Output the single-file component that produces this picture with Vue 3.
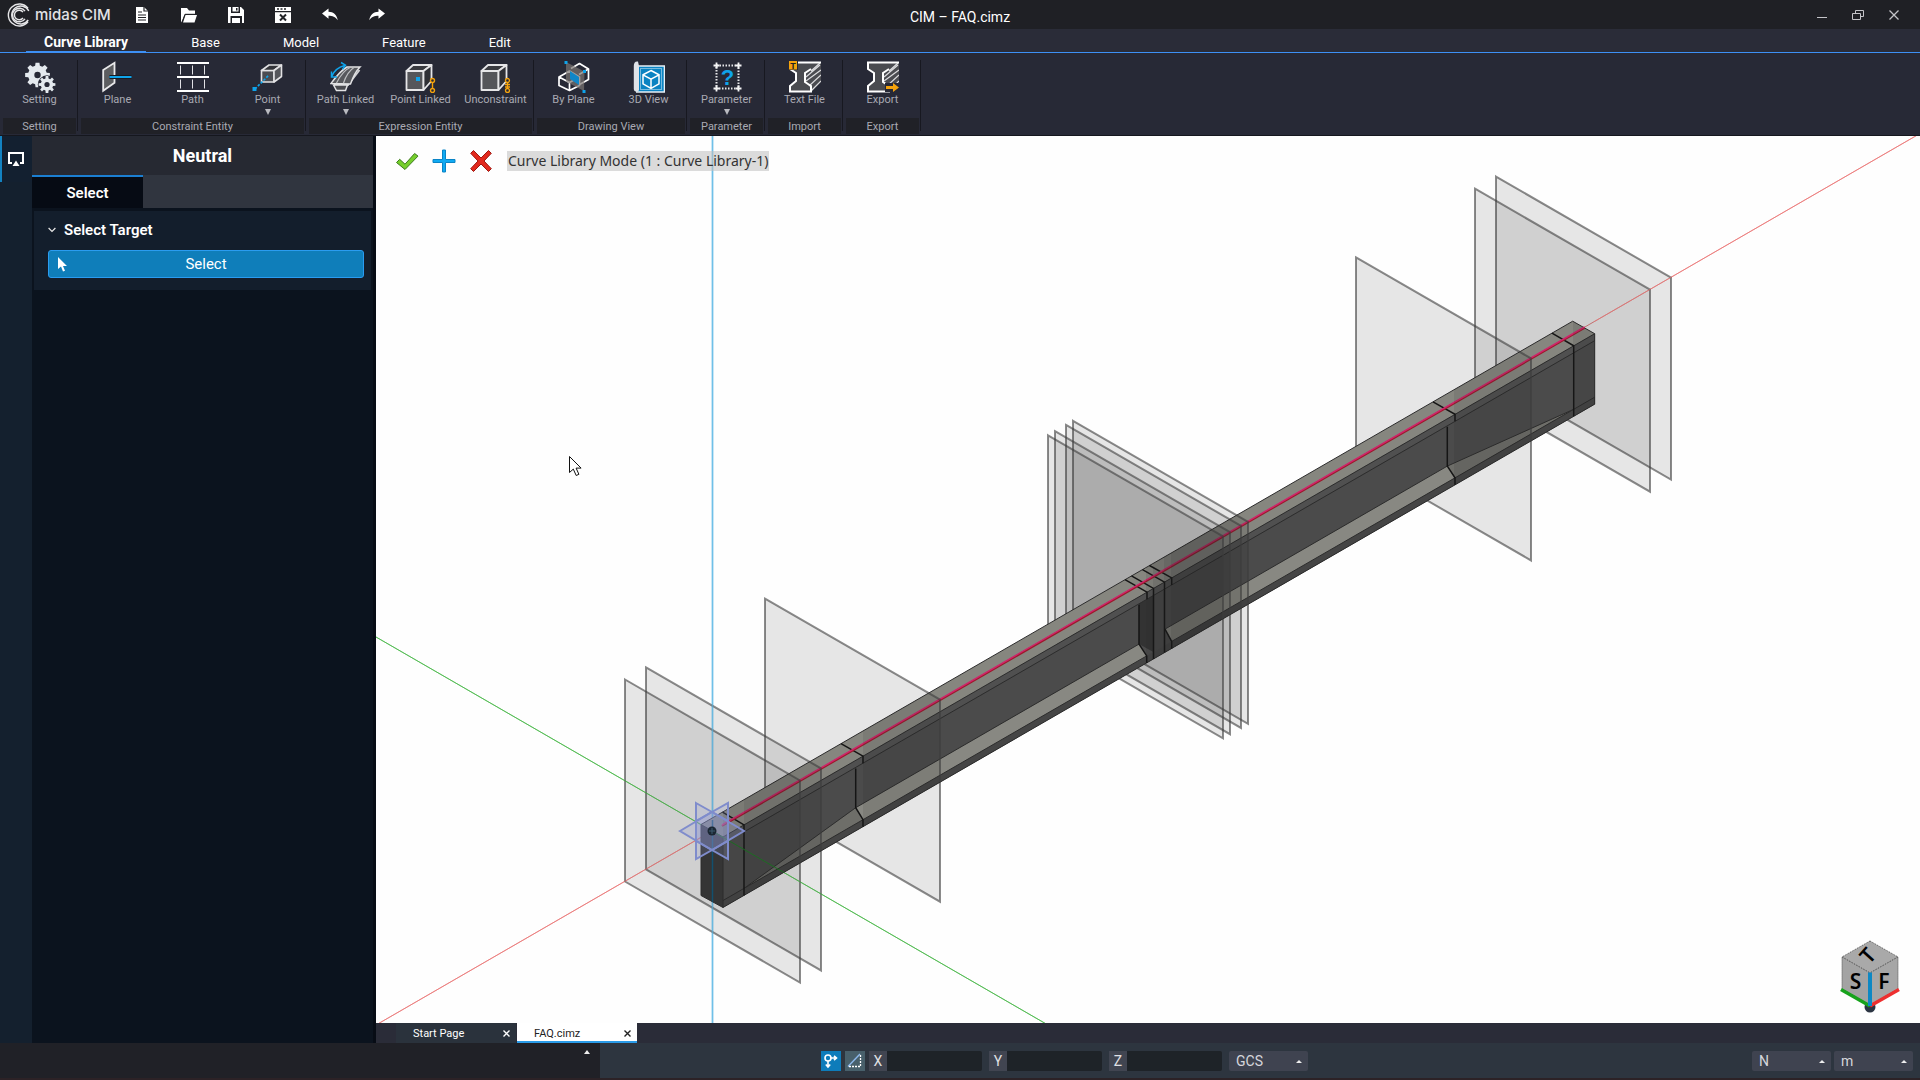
<template>
  <div class="app">
    <header class="titlebar">
      <div class="brand">
        <svg width="24" height="24" viewBox="0 0 24 24" fill="none" stroke="#e6e6e8" stroke-width="1.4">
          <path d="M21 5.2A11 11 0 1 0 21 18.8" />
          <path d="M21.8 8A9 9 0 1 0 21.2 17" />
          <path d="M18 8.2A6.8 6.8 0 1 0 18 15.8" />
          <path d="M16 9A4.8 4.8 0 1 0 16 15" />
        </svg>
        <span class="brand-name">midas CIM</span>
      </div>
      <nav class="quick">
        <button v-for="q in quickActions" :key="q.name" type="button" :aria-label="q.name">
          <svg width="18" height="18" viewBox="0 0 18 18"><g v-html="q.icon"></g></svg>
        </button>
      </nav>
      <h1 class="doc-title">CIM – FAQ.cimz</h1>
      <div class="window-controls">
        <button type="button" aria-label="Minimize">
          <svg width="12" height="12" viewBox="0 0 12 12" stroke="#c4c4c8"><path d="M1 8.5h10" /></svg>
        </button>
        <button type="button" aria-label="Restore">
          <svg width="12" height="12" viewBox="0 0 12 12" fill="none" stroke="#c4c4c8"><path d="M.5 4.5h8v6h-8zM3.500 4.500v-3h8v6h-3" /></svg>
        </button>
        <button type="button" aria-label="Close">
          <svg width="12" height="12" viewBox="0 0 12 12" stroke="#c4c4c8" stroke-width="1.3"><path d="M1.500 1.500l9 9M10.500 1.500l-9 9" /></svg>
        </button>
      </div>
    </header>

    <nav class="menu">
      <button
        v-for="tab in menuTabs"
        :key="tab"
        type="button"
        :class="{ active: tab === activeTab }"
        @click="activeTab = tab"
      >{{ tab }}</button>
    </nav>

    <section class="ribbon">
      <div v-for="group in ribbon" :key="group.title" class="group">
        <div class="tools">
          <button v-for="tool in group.tools" :key="tool.label" type="button" class="tool">
            <svg width="32" height="32" viewBox="0 0 32 32"><g v-html="tool.icon"></g></svg>
            <span>{{ tool.label }}</span>
            <svg v-if="tool.menu" class="caret" width="6" height="6" viewBox="0 0 6 6"><path d="M0 0h6L3 6z" fill="#b9bac0" /></svg>
          </button>
        </div>
        <div class="group-title">{{ group.title }}</div>
      </div>
    </section>

    <main class="workspace">
      <aside class="rail">
        <button type="button" class="rail-item" aria-label="Display">
          <svg width="16" height="14" viewBox="0 0 16 14"><path d="M4 11H1V1h14v10h-3" fill="none" stroke="#fff" stroke-width="2" /><path d="M8 8.500l3.500 5.500h-7z" fill="#fff" /></svg>
        </button>
      </aside>

      <aside class="panel">
        <h2>Neutral</h2>
        <div class="panel-tabs"><button type="button" class="panel-tab">Select</button></div>
        <section class="panel-section">
          <h3>
            <svg width="8" height="6" viewBox="0 0 8 6" fill="none" stroke="#e8e8e8" stroke-width="1.2"><path d="M.6 1L4 4.400 7.400 1" /></svg>
            Select Target
          </h3>
          <button type="button" class="select-btn">
            <svg width="10" height="15" viewBox="0 0 10 15" fill="#fff"><path d="M0 0v12l3-2.500L5 14.500l2-.8-2-4.700h4z" /></svg>
            <span>Select</span>
          </button>
        </section>
      </aside>

      <section class="canvas-column">
        <div class="viewport">
          <svg class="scene" viewBox="376 136 1544 887" preserveAspectRatio="xMidYMid slice">
            <defs>
              <clipPath id="beam-clip"><polygon :points="beam.outline" /></clipPath>
            </defs>

            <g class="axes">
              <path class="axis-x" d="M376 1025L1924 131.200" />
              <path class="axis-y" d="M376 637L1048 1025" />
              <path class="axis-z" d="M712.500 130V1030" />
            </g>
            <polygon v-for="p in planes" :key="p.x" class="plane" :points="p.full" />
            <g class="axes over-planes">
              <path class="axis-x" d="M376 1025L712 831M1594 321.700L1924 131.200" />
              <path class="axis-y" d="M376 637L1048 1025" />
              <path class="axis-z" d="M712.500 130V1030" />
            </g>

            <polygon v-for="(f, i) in beam.faces" :key="'f' + i" :points="f.points" :fill="f.fill" />
            <polyline v-for="(l, i) in beam.edges" :key="'e' + i" class="edge" :points="l" />
            <polyline v-for="(l, i) in beam.cuts" :key="'c' + i" class="cut" :points="l" />
            <path class="curve-shade" d="M722 826L1584.500 328" />
            <path class="curve" d="M722 825L1584.500 327" />

            <g clip-path="url(#beam-clip)">
              <polygon v-for="p in planes" :key="p.x" class="tint" :points="p.front" />
              <polyline v-for="p in planes" :key="'b' + p.x" class="plane-border" :points="p.border" />
              <path stroke="#1c6c22" d="M712 831L812 888.700" />
              <path stroke="#12506e" stroke-width="1.500" d="M712.500 820V905" />
            </g>

            <g class="gizmo">
              <polygon points="696,803 728,821 728,859 696,841" />
              <polygon points="728,803 728,841 696,859 696,821" />
              <polygon points="680,831 712,812 744,831 712,850" />
            </g>
            <circle cx="712" cy="831" r="4.500" fill="#1b2733" />
            <path d="M709 831h6M712 828v6" stroke="#3d5a70" stroke-width="1" />
            <path class="pointer" d="M569.500 456.500v16l3.800-3.400 2.900 6.400 2.700-1.200-2.800-6.200h5z" />
          </svg>

          <div class="mode-bar">
            <button type="button" aria-label="Apply">
              <svg width="24" height="24" viewBox="0 0 24 24"><path d="M1.500 13.500l3.200-3.200L10 15.200 19.600 4.500l3.400 2.600L10 20.500z" fill="#76cf2c" stroke="#3b7a1c" stroke-linejoin="round" /></svg>
            </button>
            <button type="button" aria-label="Add">
              <svg width="24" height="24" viewBox="0 0 24 24"><path d="M10.500 1h3v9.500H23v3h-9.500V23h-3v-9.500H1v-3h9.500z" fill="#10aaf2" stroke="#0a84c6" stroke-linejoin="round" /></svg>
            </button>
            <button type="button" aria-label="Cancel">
              <svg width="24" height="24" viewBox="0 0 24 24"><path d="M4.500 1.500L12 9l7.500-7.500 2.800 2.800L15 12l7.300 7.700-2.800 2.800L12 15l-7.500 7.500-2.800-2.800L9 12 1.700 4.300z" fill="#e2281c" stroke="#9d170f" stroke-linejoin="round" /></svg>
            </button>
            <output>Curve Library Mode (1 : Curve Library-1)</output>
          </div>

          <svg class="nav-cube" width="60" height="74" viewBox="0 0 60 74">
            <circle cx="30" cy="68" r="5.500" fill="#2b3442" />
            <g stroke="#555" stroke-dasharray="1 1">
              <polygon points="30,2 58,18 30,34 2,18" fill="#a9a9a9" />
              <polygon points="2,18 30,34 30,66 2,50" fill="#a3a3a3" />
              <polygon points="58,18 30,34 30,66 58,50" fill="#a6a6a6" />
            </g>
            <path d="M1 50.500L30 67" stroke="#17a31c" stroke-width="3.500" />
            <path d="M30 67L59 50.500" stroke="#ee2f2f" stroke-width="3.500" />
            <path d="M30 33.500V67" stroke="#0d88c4" stroke-width="4" />
            <g class="cube-text">
              <text x="15.500" y="50">S</text>
              <text x="44" y="50">F</text>
              <text x="0" y="7" transform="translate(28 17) rotate(-48)">T</text>
            </g>
          </svg>
        </div>

        <div class="doc-tabs">
          <div v-for="doc in docs" :key="doc.name" class="doc-tab" :class="{ current: doc.current }">
            <button type="button" class="doc-name">{{ doc.name }}</button>
            <button type="button" class="doc-close" :aria-label="'Close ' + doc.name">
              <svg width="7" height="7" viewBox="0 0 7 7" stroke="currentColor" stroke-width="1.400"><path d="M.5.5l6 6M6.500.5l-6 6" /></svg>
            </button>
          </div>
        </div>
      </section>
    </main>

    <footer class="status">
      <div class="console">
        <button type="button" aria-label="Expand console"><svg width="6" height="4" viewBox="0 0 6 4"><path d="M3 0l3 4H0z" fill="#eee" /></svg></button>
      </div>
      <div class="status-main">
        <div class="coords">
          <button type="button" class="toggle on" aria-label="Snap">
            <svg width="20" height="20" viewBox="0 0 20 20" fill="none" stroke="#fff" stroke-width="1.600"><circle cx="7" cy="7" r="3" /><path d="M10 7h5M13 4.800L15.500 7 13 9.200M7 10v6M4.800 13.500L7 16l2.200-2.500" /></svg>
          </button>
          <button type="button" class="toggle" aria-label="Relative">
            <svg width="20" height="20" viewBox="0 0 20 20" fill="none"><path d="M3 15.500L15 3" stroke="#8db8ec" stroke-width="1.400" /><path d="M15.500 4v11.500H4" stroke="#fff" stroke-width="1.300" stroke-dasharray="2 1" /></svg>
          </button>
          <label v-for="axis in ['X', 'Y', 'Z']" :key="axis" class="coord">
            <span>{{ axis }}</span>
            <input type="text" />
          </label>
          <label class="pick"><select aria-label="Coordinate system"><option>GCS</option></select></label>
        </div>
        <div class="units">
          <label class="pick"><select aria-label="Force unit"><option>N</option></select></label>
          <label class="pick"><select aria-label="Length unit"><option>m</option></select></label>
        </div>
      </div>
    </footer>
  </div>
</template>

<script setup>
import { ref } from 'vue';

const menuTabs = ['Curve Library', 'Base', 'Model', 'Feature', 'Edit'];
const activeTab = ref('Curve Library');

const docs = [
  { name: 'Start Page', current: false },
  { name: 'FAQ.cimz', current: true }
];

const quickActions = [
  { name: 'New', icon: '<path d="M3 1h8l4 4v12H3z" fill="#fff"/><path d="M11 1v4h4M5 6h4M5 9h8M5 11.500h8M5 14h8" fill="none" stroke="#222327" stroke-width="1.200"/>' },
  { name: 'Open', icon: '<path d="M1 16.500V2h6l2 2.500h6V8H5L2.500 14z" fill="#fff"/><path d="M5.500 9H17l-2.500 7.500H3z" fill="#fff"/><path d="M2.500 15L5 8.300h10" fill="none" stroke="#222327"/>' },
  { name: 'Save', icon: '<path d="M1 1h3v6h9V1h1l3 3v13h-2v-7H3.500v7H1z" fill="#fff"/><path d="M5.500 1h6v4.500h-6zM5 12h8v5H5z" fill="#fff"/><path d="M9 2h1.500v2.500H9z" fill="#222327"/>' },
  { name: 'Close file', icon: '<path d="M1 1h16v4H1zM1 6.200h16V17H1z" fill="#fff"/><path d="M3 3h2M6.500 3h2M10 3h2" stroke="#222327" stroke-width="1.500"/><path d="M6 8.500l6 6M12 8.500l-6 6" stroke="#222327" stroke-width="2"/>' },
  { name: 'Undo', icon: '<path d="M1 7.500L7.500 2.500v3.200c5 0 8.500 3 9.200 8.600-2.500-3.600-5-4.500-9.200-4.500v3z" fill="#fff"/>' },
  { name: 'Redo', icon: '<path d="M17 7.500L10.500 2.500v3.200c-5 0-8.500 3-9.200 8.600 2.500-3.600 5-4.500 9.200-4.500v3z" fill="#fff"/>' }
];

function gear(cx, cy, outer, inner, teeth) {
  const step = (Math.PI * 2) / teeth;
  const pts = [];
  for (let i = 0; i < teeth; i++) {
    const a = i * step;
    [[-0.32, inner], [-0.2, outer], [0.2, outer], [0.32, inner]].forEach(([k, r]) => {
      pts.push(`${(cx + Math.cos(a + k * step) * r).toFixed(2)},${(cy + Math.sin(a + k * step) * r).toFixed(2)}`);
    });
  }
  return `<polygon points="${pts.join(' ')}" fill="#e4e9ee"/>`;
}

const cube = '<g fill="#55565a" stroke="#e6e6e8" stroke-width="1.800" stroke-linejoin="round"><path d="M1.500 10h17v19h-17z"/><path d="M1.500 10L8 4h18.500l-8 6z" fill="#3a3b40"/><path d="M18.500 10l8-6v16l-8 9z" fill="#2f3036"/></g>';
const iBeam = '<path d="M0 1h32v20L22 31H0v-6l6-5v-8L0 8z" fill="#4a4b50"/><path d="M22 10L31 2M17 16L31 4M17 20L32 9M20 25L32 14M22 30L32 20" stroke="#dcdcdf" stroke-width="1.200"/><path d="M32 1.500H1V8l6 4v8l-6 5v5.500h21V25l-6-4v-9l6-4" fill="none" stroke="#fff" stroke-width="2"/>';

const icons = {
  setting: gear(13.5, 14, 12.5, 9.5, 8) + '<circle cx="13.500" cy="14" r="3.200" fill="#272936"/><circle cx="23" cy="23.500" r="9.200" fill="#272936"/>' + gear(23, 23.5, 8.5, 6.2, 8) + '<circle cx="23" cy="23.500" r="2.600" fill="#272936"/>',
  plane: '<path d="M1.200 9L12.500 1.800v20L1.200 29.800z" fill="#5c5d60" stroke="#e8e8ea" stroke-width="1.800"/><path d="M7.500 16h22" stroke="#1a1b20" stroke-width="4"/><path d="M7.500 16h22" stroke="#0fa3ea" stroke-width="2"/>',
  path: '<path d="M0 2h32M0 16h32M0 30h32" stroke="#fff" stroke-width="2"/><path d="M3.500 4.500v9M15.500 4.500v9M27.500 4.500v9M3.500 18.500v9M15.500 18.500v9M27.500 18.500v9" stroke="#e0e0e4"/>',
  point: '<g fill="#4c4d52" stroke="#e2e2e4" stroke-width="1.600" stroke-linejoin="round"><path d="M9.500 9.500H22V21H9.500z"/><path d="M9.500 9.500L17 4h12.500L22 9.500z" fill="#333439"/><path d="M22 9.500L29.500 4v11.500L22 21z" fill="#55565b"/></g><path d="M3 28L17 14" stroke="#0fa3ea" stroke-width="1.600" stroke-dasharray="2.500 1.500"/><path d="M.5 26h4v4h-4z" fill="#0fa3ea"/>',
  pathLinked: '<path d="M4 24h14l11.500-15" fill="none" stroke="#d0d0d2" stroke-width="2"/><path d="M3.500 24l3 5.500h9l2-5.500z" fill="#4a4b50" stroke="#e2e2e4" stroke-width="1.500"/><path d="M1 22.500C5 17 10 10 17 6h13c-4 4-7 10-9.500 17z" fill="#58595d" stroke="#e2e2e4" stroke-width="1.500"/><path d="M6.500 22C10 15 14 9 21 6M13.500 22c2-6 5-12 11-16" fill="none" stroke="#bfc0c3" stroke-width="1.200"/><path d="M2 15C4 10 9 6 14.500 4.500M1.500 10.500V16H7M11 1.500l4.500 2.700-3 4" fill="none" stroke="#0fa3ea" stroke-width="1.500"/>',
  pointLinked: cube + '<path d="M11 16h4v4h-4z" fill="#0fa3ea"/><g fill="#272936" stroke="#f5a30c" stroke-width="1.400"><path d="M27.500 21v8"/><circle cx="27.500" cy="19.500" r="2"/><circle cx="27.500" cy="29.500" r="2"/></g>',
  unconstraint: cube + '<g fill="#272936" stroke="#f5a30c" stroke-width="1.300"><path d="M27.500 22v5M25 23.500h5M25 26h5"/><circle cx="27.500" cy="19.500" r="2"/><circle cx="27.500" cy="29.500" r="2"/></g>',
  byPlane: '<g fill="none" stroke="#fff" stroke-width="1.700" stroke-linejoin="round"><path d="M13 7.500L21.500 2.500l9 5.500v10.500l-9 5"/><path d="M30.500 8L21 13.500"/></g><g fill="none" stroke="#fff" stroke-width="1.700" stroke-linejoin="round"><path d="M1 16l10.500-6 10 6-10 5.500zM1 16v8.500l10.500 5 10-5V16M11.500 21.500v8"/></g><path d="M8 1l18.500 9.500L26 30 8 20.500z" fill="#7b7572" fill-opacity=".7"/><path d="M12 10l9 6v8l-9-6z" fill="#0f86c8"/><path d="M6.500 0h3v3h-3zM25 9h3v3h-3zM24.500 29h3v3h-3z" fill="#0fa3ea"/>',
  view3d: '<path d="M5 5h26.500v26H3" fill="#0b83c2" stroke="#e8f0f6" stroke-width="1.600"/><path d="M5 .5C2 0 .8 2 .8 5v23c0 3 4.200 4 5.200 1V5z" fill="#dfe3e8"/><path d="M7.500 7.500h21v21h-21z" fill="none" stroke="#e6f3fb" stroke-dasharray="1 1"/><path d="M18 9.500l8 4.300v9L18 27.500l-8-4.700v-9zM10 13.800l8 4.400 8-4.400M18 18.200v9.300" fill="none" stroke="#fff" stroke-width="1.500"/>',
  parameter: '<path d="M5.500 4.500h22v23h-22z" fill="none" stroke="#e6e6e8" stroke-width="2" stroke-dasharray="1.500 1.500"/><path d="M2.500 4.500h6M5.500 1.500v6M24.500 4.500h6M27.500 1.500v6M2.500 27.500h6M5.500 24.500v6M24.500 27.500h6M27.500 24.500v6" stroke="#f4f4f5" stroke-width="1.800"/><text x="16.500" y="24" text-anchor="middle" font-family="Liberation Sans, sans-serif" font-size="22" font-weight="700" fill="#0fa3ea">?</text>',
  textFile: iBeam + '<path d="M-1-1H9V9H-1z" fill="#272936"/><path d="M0 0h8v8.500H0z" fill="#f5a30c"/><text x="4" y="7.500" text-anchor="middle" font-family="Liberation Sans, sans-serif" font-size="9" font-weight="700" fill="#222">T</text>',
  export: iBeam + '<path d="M18 22h14v9H18z" fill="#272936"/><path d="M19 25h7v-3l6 4.500-6 4.500v-3h-7z" fill="#f5a30c"/>'
};

const ribbon = [
  { title: 'Setting', tools: [{ label: 'Setting', icon: icons.setting }] },
  {
    title: 'Constraint Entity',
    tools: [
      { label: 'Plane', icon: icons.plane },
      { label: 'Path', icon: icons.path },
      { label: 'Point', icon: icons.point, menu: true }
    ]
  },
  {
    title: 'Expression Entity',
    tools: [
      { label: 'Path Linked', icon: icons.pathLinked, menu: true },
      { label: 'Point Linked', icon: icons.pointLinked },
      { label: 'Unconstraint', icon: icons.unconstraint }
    ]
  },
  {
    title: 'Drawing View',
    tools: [
      { label: 'By Plane', icon: icons.byPlane },
      { label: '3D View', icon: icons.view3d }
    ]
  },
  { title: 'Parameter', tools: [{ label: 'Parameter', icon: icons.parameter, menu: true }] },
  { title: 'Import', tools: [{ label: 'Text File', icon: icons.textFile }] },
  { title: 'Export', tools: [{ label: 'Export', icon: icons.export }] }
];

// isometric slope, tan 30deg
const K = 0.5774;
const pts = (list) => list.map(([x, y]) => `${x},${y.toFixed(1)}`).join(' ');
const back = (x) => [x, 824.5 - (x - 701) * K];
const front = (x, drop = 0) => [x, 837 - (x - 723) * K + drop];

// section planes, by the x of their upper left corner
const planes = [1496, 1475, 1356, 1073, 1066, 1055, 1048, 765, 646, 625].map((x) => {
  const y = 679.5 - (x - 625) * K;
  const mid = x + 98;
  const right = x + 175;
  return {
    x,
    full: pts([[x, y], [right, y + 101], [right, y + 303], [x, y + 202]]),
    front: pts([[mid, y + 56.5], [right, y + 101], [right, y + 303], [mid, y + 258.5]]),
    border: pts([[mid, y + 56.5], [right, y + 101], [right, y + 303]])
  };
});

const H = 70.5; // girder depth
const LIP = 63.5; // top of the bottom flange
const WEB = 47.3; // foot of the web
const START = 723;
const END = 1594.7;

const beam = {
  outline: pts([back(701), back(1572.7), front(END), front(END, H), front(START, H), [701, 895.5]]),
  faces: [
    { fill: '#86867f', points: pts([back(701), back(1572.7), front(END), front(START)]) },
    { fill: '#4b4b4b', points: pts([front(START), front(END), front(END, H), front(START, H)]) },
    { fill: '#505050', points: pts([front(START), front(END), front(END, 7), front(START, 7)]) },
    { fill: '#454545', points: pts([front(START, LIP), front(END, LIP), front(END, H), front(START, H)]) },
    { fill: '#353535', points: pts([back(701), front(START), front(START, H), [701, 895.5]]) },
    { fill: '#6e6e69', points: pts([front(744, LIP), front(855.7, WEB), front(863, LIP)]) },
    { fill: '#888882', points: pts([front(855.7, WEB), front(1139, WEB), front(1146.7, LIP), front(863, LIP)]) },
    { fill: '#888882', points: pts([front(1165, WEB), front(1447.3, WEB), front(1455, LIP), front(1171.7, LIP)]) },
    { fill: '#6e6e69', points: pts([front(1447.3, WEB), front(1573.7, LIP), front(1455, LIP)]) },
    { fill: '#333333', points: pts([front(1139, 7), front(1153.3, 7), front(1153.3, LIP), front(1139, WEB)]) },
    { fill: '#474747', points: pts([front(1153.3, 7), front(1164.3, 7), front(1164.3, LIP), front(1153.3, LIP)]) }
  ],
  edges: [
    pts([front(START), back(701), back(1572.7), front(END), front(START), front(START, H), front(END, H), front(END)]),
    pts([back(701), [701, 895.5], front(START, H)]),
    pts([front(744, 7), front(END, 7)]),
    pts([front(START, LIP), front(1146.7, LIP)]),
    pts([front(1171.7, LIP), front(END, LIP)]),
    pts([front(744, LIP), front(855.7, WEB), front(1139, WEB)]),
    pts([front(1165, WEB), front(1447.3, WEB), front(1573.7, LIP)])
  ],
  cuts: [
    pts([back(722.5), front(744), front(744, H)]),
    pts([back(841), front(863), front(863, 7)]),
    pts([front(855.7, 8), front(855.7, WEB), front(863, LIP), front(863, H)]),
    pts([back(1125), front(1147), front(1147, 7)]),
    pts([front(1139, 8), front(1139, WEB), front(1146.7, LIP), front(1146.7, H)]),
    pts([back(1131.5), front(1153.5), front(1153.5, H)]),
    pts([back(1142.5), front(1164.5), front(1164.5, H)]),
    pts([back(1149.5), front(1171.7), front(1171.7, 7)]),
    pts([front(1165, WEB), front(1171.7, LIP), front(1171.7, H)]),
    pts([back(1433), front(1455), front(1455, 7)]),
    pts([front(1447.3, 8), front(1447.3, WEB), front(1455, LIP), front(1455, H)]),
    pts([back(1552), front(1573.7), front(1573.7, H)])
  ]
};
</script>

<style>
body {
  margin: 0;
  background: #0b131e;
}
</style>

<style scoped>
.app {
  display: flex;
  flex-direction: column;
  height: 100vh;
  font-family: Roboto, "Noto Sans", sans-serif;
  font-size: 14px;
  color: #fff;
  overflow: hidden;
}

button,
input,
select {
  font: inherit;
  color: inherit;
  border: 0;
  padding: 0;
  margin: 0;
  background: none;
  border-radius: 0;
}

button {
  display: flex;
  align-items: center;
  justify-content: center;
  cursor: pointer;
}

h1,
h2,
h3 {
  margin: 0;
  font-size: inherit;
}

/* title bar */
.titlebar {
  display: grid;
  grid-template-columns: 1fr auto 1fr;
  grid-template-areas: "left title right";
  align-items: center;
  height: 29px;
  background: #1f2025;
}

.brand {
  grid-area: left;
  display: flex;
  align-items: center;
  gap: 4px;
  padding-left: 7px;
}

.brand-name {
  font-family: Inter, sans-serif;
  font-size: 15px;
  font-weight: 500;
  color: #e2e2e5;
}

.quick {
  grid-area: left;
  display: flex;
  padding-left: 118px;
}

.quick button {
  width: 47px;
  height: 28px;
}

.doc-title {
  grid-area: title;
  padding-top: 4px;
  font-weight: 400;
}

.window-controls {
  grid-area: right;
  display: flex;
  justify-content: flex-end;
  padding-right: 8px;
}

.window-controls button {
  width: 36px;
  height: 28px;
}

/* menu */
.menu {
  display: flex;
  gap: 27px;
  height: 23px;
  padding-left: 26px;
  font-size: 13px;
  background: #2a2c38;
  border-bottom: 1px solid #3d90f5;
}

.menu button {
  padding: 4px 18px 0;
  border-bottom: 1px solid transparent;
}

.menu .active {
  font-size: 14px;
  font-weight: 700;
  border-color: #3d90f5;
}

/* ribbon */
.ribbon {
  display: flex;
  height: 82px;
  background: #272936;
  border-bottom: 1px solid #15171e;
}

.group {
  display: flex;
  flex-direction: column;
  padding-left: 2px;
  background: linear-gradient(#171820, #171820) right 7px / 1px 71px no-repeat;
  padding-right: 1px;
  font-size: 11px;
  color: #a9aab3;
}

.tools {
  display: flex;
  height: 65px;
}

.tool {
  flex-direction: column;
  justify-content: flex-start;
  width: 75px;
  padding-top: 8px;
}

.tool span {
  line-height: 14px;
}

.tool .caret {
  margin-top: 2px;
}

.group-title {
  margin: 0 1px;
  padding-top: 1px;
  line-height: 15px;
  text-align: center;
  background: #202127;
}

/* body */
.workspace {
  display: flex;
  flex: 1;
  min-height: 0;
}

.rail {
  width: 32px;
  background: #14202e;
}

.rail-item {
  width: 32px;
  height: 46px;
  border-left: 2px solid #1382c1;
  padding-right: 2px;
  background: #132030;
}

.panel {
  width: 341px;
  border-right: 3px solid #070c15;
  background: #0b131e;
}

.panel h2 {
  line-height: 39px;
  font-size: 18px;
  text-align: center;
  background: #262932;
}

.panel-tabs {
  display: flex;
  height: 33px;
  background: #30353f;
}

.panel-tab {
  width: 111px;
  font-size: 15px;
  font-weight: 600;
  background: #060b14;
  border-top: 2px solid #1b7fd2;
}

.panel-section {
  margin: 3px 2px;
  padding: 9px 7px 12px 14px;
  background: #131e2c;
}

.panel-section h3 {
  display: flex;
  align-items: center;
  gap: 8px;
  height: 20px;
  font-size: 15px;
  font-weight: 600;
}

.select-btn {
  position: relative;
  width: 100%;
  height: 28px;
  margin-top: 10px;
  font-size: 15px;
  background: #0f7eba;
  border: 1px solid #2a9cf0;
  border-radius: 3px;
}

.select-btn svg {
  position: absolute;
  left: 9px;
}

/* viewport */
.canvas-column {
  display: flex;
  flex: 1;
  flex-direction: column;
  min-width: 0;
}

.viewport {
  position: relative;
  flex: 1;
  min-height: 0;
  background: #fefefe;
}

.scene {
  display: block;
  width: 100%;
  height: 100%;
}

.axes path {
  fill: none;
}

.axis-x {
  stroke: #ec7f7f;
}

.axis-y {
  stroke: #55bd55;
}

.axis-z {
  stroke: #6fc0e8;
  stroke-width: 1.5;
}

.over-planes {
  opacity: 0.6;
}

.plane,
.tint {
  fill: #282828;
  fill-opacity: 0.11;
}

.plane,
.plane-border {
  stroke: #3c3c3c;
  stroke-opacity: 0.6;
  stroke-width: 2;
}

.plane-border {
  fill: none;
}

.edge {
  fill: none;
  stroke: #2c2c2c;
  stroke-width: 1;
}

.cut {
  fill: none;
  stroke: #151515;
  stroke-width: 1.5;
}

.curve {
  stroke: #d0246a;
  stroke-width: 1.5;
}

.curve-shade {
  stroke: #9c1a2a;
  stroke-width: 2;
}

.gizmo polygon {
  fill: #8a96d4;
  fill-opacity: 0.2;
  stroke: #7f8ccc;
  stroke-width: 2;
}

.pointer {
  fill: #fff;
  stroke: #111;
}

.mode-bar {
  position: absolute;
  top: 12px;
  left: 12px;
  display: flex;
  align-items: center;
}

.mode-bar button {
  width: 37px;
  height: 26px;
}

.mode-bar output {
  margin-left: 8px;
  padding: 0 1px;
  font-family: "Noto Sans", sans-serif;
  font-size: 14px;
  line-height: 20px;
  color: #333;
  background: rgba(190, 190, 190, 0.55);
}

.nav-cube {
  position: absolute;
  right: 20px;
  bottom: 10px;
}

.cube-text {
  font-family: "Noto Sans", sans-serif;
  font-size: 21px;
  font-weight: 600;
  text-anchor: middle;
  fill: #000;
}

.doc-tabs {
  display: flex;
  gap: 1px;
  height: 20px;
  padding-left: 20px;
  background: #2a2c38;
}

.doc-tab {
  display: flex;
  justify-content: space-between;
  width: 120px;
  box-sizing: border-box;
  padding: 0 6px 0 17px;
  font-size: 11px;
  background: #2a323c;
}

.doc-tab.current {
  color: #222;
  background: #fff;
  box-shadow: inset 0 -2px #2a9be8;
}

.doc-close {
  width: 8px;
}

/* status bar */
.status {
  display: flex;
  height: 35px;
  background: #202127;
  border-bottom: 2px solid #2c2226;
}

.console {
  display: flex;
  justify-content: flex-end;
  width: 600px;
}

.console button {
  width: 27px;
  height: 18px;
}

.status-main {
  display: flex;
  flex: 1;
  align-items: center;
  justify-content: space-between;
  padding: 0 7px 0 221px;
  background: #2d353f;
}

.coords,
.units {
  display: flex;
  gap: 3px;
}

.toggle {
  width: 20px;
  height: 20px;
  margin-right: 1px;
  background: #48606b;
}

.toggle.on {
  background: #0e7cba;
}

.coord {
  display: flex;
  margin-right: 4px;
}

.coord span {
  width: 18px;
  line-height: 20px;
  text-align: center;
  color: #e0e0e4;
  background: #414551;
}

.coord input {
  width: 95px;
  height: 20px;
  background: #1e2328;
  border-radius: 0 2px 2px 0;
}

.pick {
  position: relative;
}

.pick select {
  display: block;
  width: 79px;
  height: 20px;
  padding-left: 7px;
  color: #d6d6dc;
  background: #3f4350;
  border-radius: 2px;
  appearance: none;
}

.pick::after {
  content: "";
  position: absolute;
  top: 9px;
  right: 6px;
  border: 3px solid transparent;
  border-top: 0;
  border-bottom-color: #eee;
}
</style>
